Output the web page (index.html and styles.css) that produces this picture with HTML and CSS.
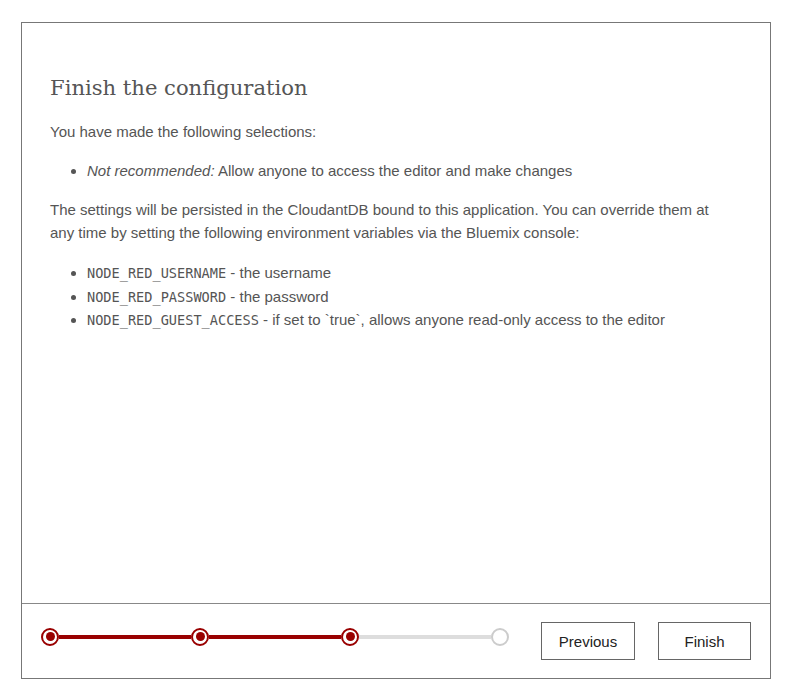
FILE: index.html
```html
<!DOCTYPE html>
<html>
<head>
<meta charset="utf-8">
<link rel="stylesheet" href="styles.css">
</head>
<body>
<div class="dialog">
  <div class="content">
    <h1 class="title">Finish the configuration</h1>
    <p>You have made the following selections:</p>
    <ul class="list">
      <li><em>Not recommended:</em> Allow anyone to access the editor and make changes</li>
    </ul>
    <p>The settings will be persisted in the CloudantDB bound to this application. You can override them at any time by setting the following environment variables via the Bluemix console:</p>
    <ul class="list">
      <li><code>NODE_RED_USERNAME</code> - the username</li>
      <li><code>NODE_RED_PASSWORD</code> - the password</li>
      <li><code>NODE_RED_GUEST_ACCESS</code> - if set to `true`, allows anyone read-only access to the editor</li>
    </ul>
  </div>
  <div class="footer">
    <div class="progress">
      <span class="step done"></span>
      <span class="bar done"></span>
      <span class="step done"></span>
      <span class="bar done"></span>
      <span class="step done"></span>
      <span class="bar"></span>
      <span class="step"></span>
    </div>
    <div class="buttons">
      <button class="btn">Previous</button>
      <button class="btn">Finish</button>
    </div>
  </div>
</div>
</body>
</html>
```

FILE: styles.css
```css
html, body {
  margin: 0;
  padding: 0;
  background: #fff;
}
body {
  padding: 22px 0 0 21px;
  font-family: "Liberation Sans", Arial, sans-serif;
  font-size: 15px;
  color: #555;
}
.dialog {
  box-sizing: border-box;
  width: 750px;
  height: 657px;
  border: 1px solid #777;
  display: flex;
  flex-direction: column;
}
.content {
  flex: 1;
  padding: 50px 40px 0 28px;
}
.title {
  margin: 0 0 17px 0;
  font-family: "DejaVu Serif", "Liberation Serif", serif;
  font-weight: normal;
  font-size: 21.1px;
  line-height: 30px;
  color: #555;
}
p {
  margin: 0 0 16px 0;
  line-height: 23.3px;
}
.list {
  margin: 0 0 15px 0;
  padding-left: 37px;
  line-height: 23.5px;
}
.list + p + .list {
  margin-top: 17px;
}
code {
  font-family: "DejaVu Sans Mono", "Liberation Mono", monospace;
  font-size: 13.6px;
  line-height: 1;
}
.footer {
  border-top: 1px solid #888;
  padding: 18px 19px 18px 19px;
  display: flex;
  align-items: center;
  justify-content: space-between;
}
.progress {
  display: flex;
  align-items: center;
  margin-bottom: 9px;
}
.step {
  box-sizing: border-box;
  width: 18px;
  height: 18px;
  border-radius: 50%;
  border: 2px solid #ccc;
  background: #fff;
  display: flex;
  align-items: center;
  justify-content: center;
}
.step.done {
  border-color: #990000;
}
.step.done::after {
  content: "";
  width: 9px;
  height: 9px;
  border-radius: 50%;
  background: #990000;
}
.bar {
  width: 132px;
  height: 4px;
  background: #ddd;
}
.bar.done {
  background: #990000;
}
.buttons {
  display: flex;
  gap: 23px;
}
.btn {
  box-sizing: border-box;
  height: 38px;
  width: 94px;
  background: #fff;
  border: 1px solid #666;
  border-radius: 0;
  font-family: "Liberation Sans", Arial, sans-serif;
  font-size: 15px;
  color: #222;
  padding: 0;
}
.btn + .btn {
  width: 93px;
}
```
